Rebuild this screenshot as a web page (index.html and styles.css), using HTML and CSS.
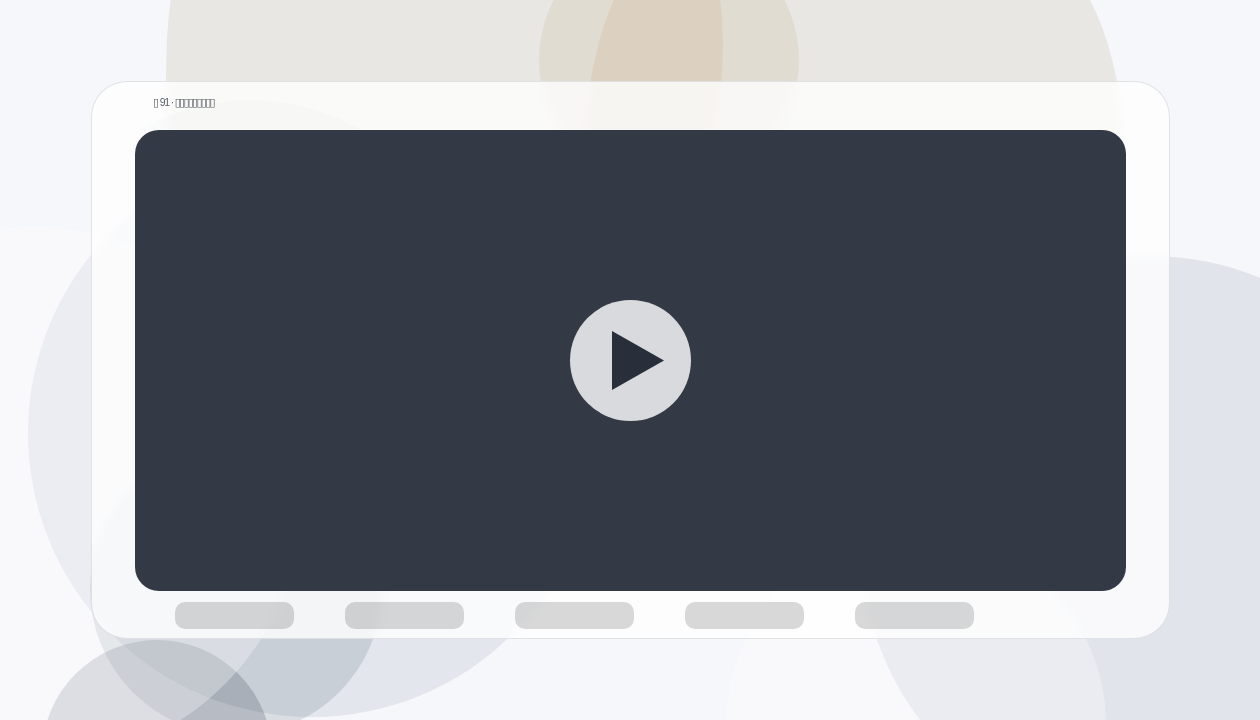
FILE: index.html
```html
<!DOCTYPE html>
<html lang="en">
<head>
<meta charset="utf-8">
<title>Video player</title>
<link rel="stylesheet" href="styles.css">
</head>
<body>
<svg class="backdrop" viewBox="0 0 1260 720" aria-hidden="true">
  <path class="beige" d="M171 -2 Q163 50 168 135 H1124 Q1117 50 1089 -2 Z"/>
  <circle class="beige-mid" cx="669" cy="60" r="130"/>
  <path class="tan" d="M615 -2 Q594 40 582 135 H714 Q728 60 720 -2 Z"/>
  <circle class="blue-left" cx="312" cy="433" r="284"/>
  <circle class="blue-right" cx="1150" cy="545" r="289"/>
  <circle class="slate" cx="236" cy="589" r="146"/>
  <circle class="grey" cx="157" cy="755" r="115"/>
  <circle class="light" cx="35" cy="495" r="268"/>
  <circle class="light" cx="916" cy="724" r="190"/>
</svg>
<main class="stage">
  <section class="card">
    <header class="title">
      <span class="card-tint"></span>
      <span class="title-text"><span class="tofu tofu-lead">▯</span>91 · <span class="tofu">▯▯▯▯▯▯▯▯▯</span></span>
    </header>
    <div class="video">
      <div class="play">
        <svg class="play-icon" viewBox="0 0 54 62" aria-hidden="true"><path d="M1 1 L53 30.5 L1 60 Z"/></svg>
      </div>
    </div>
    <nav class="pills">
      <span class="pill"></span>
      <span class="pill"></span>
      <span class="pill"></span>
      <span class="pill"></span>
      <span class="pill"></span>
    </nav>
  </section>
</main>
</body>
</html>
```
FILE: styles.css
```css
* { box-sizing: border-box; }

html, body {
  margin: 0;
  width: 1260px;
  height: 720px;
  overflow: hidden;
}

body {
  position: relative;
  background: #f6f7fb;
  font-family: "Liberation Sans", Arial, sans-serif;
}

.backdrop {
  position: absolute;
  left: 0;
  top: 0;
  width: 1260px;
  height: 720px;
}

.beige { fill: #e9e7e3; }
.beige-mid { fill: #e0dcd2; }
.tan { fill: #dcd0c0; }
.blue-left { fill: #e3e6ed; }
.blue-right { fill: #e1e4eb; }
.slate { fill: rgba(20, 40, 60, 0.12); }
.grey { fill: rgba(10, 20, 40, 0.17); }
.light { fill: rgba(255, 255, 255, 0.3); }

.stage {
  position: relative;
  padding: 81px 90px 81px 91px;
}

.card {
  position: relative;
  overflow: hidden;
  height: 558px;
  padding: 0 43px;
  border: 1px solid rgba(205, 208, 212, 0.6);
  border-radius: 36px;
  background: rgba(255, 255, 255, 0.78);
  backdrop-filter: blur(4px);
}

.title {
  position: relative;
  overflow: hidden;
  height: 48px;
  padding: 14px 0 0 18px;
}

.card-tint {
  position: absolute;
  left: -105px;
  top: 18px;
  width: 440px;
  height: 440px;
  border-radius: 50%;
  background: rgba(120, 110, 80, 0.02);
}

.title-text {
  position: relative;
  display: block;
  font-size: 10.5px;
  line-height: 12px;
  letter-spacing: -1.2px;
  color: #5a5f66;
}

.tofu {
  font-family: "DejaVu Sans", sans-serif;
  font-size: 11px;
  letter-spacing: -1.7px;
  color: #555a60;
}

.tofu-lead {
  letter-spacing: 0.6px;
}

.video {
  position: relative;
  display: flex;
  align-items: center;
  justify-content: center;
  height: 461px;
  border-radius: 24px;
  background: #343a45;
}

.play {
  display: flex;
  align-items: center;
  justify-content: center;
  width: 121px;
  height: 121px;
  padding-left: 15px;
  border-radius: 50%;
  background: #d8dadd;
}

.play-icon {
  display: block;
  width: 54px;
  height: 62px;
  fill: #282e3a;
}

.pills {
  position: relative;
  display: flex;
  gap: 51px;
  margin-top: 11px;
  padding-left: 40px;
}

.pill {
  width: 119px;
  height: 27px;
  border-radius: 10px;
  background: rgba(0, 0, 0, 0.15);
}
```
